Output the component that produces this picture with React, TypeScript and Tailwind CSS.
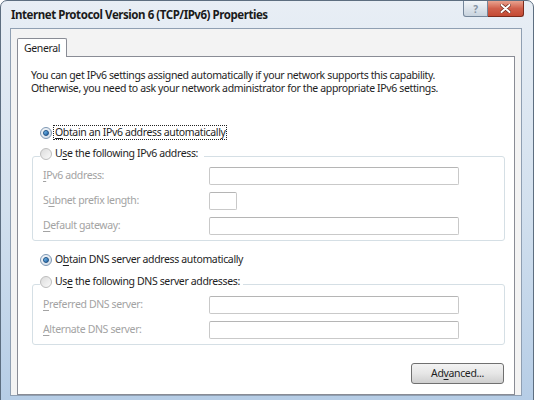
import React from "react";

const U = ({ children }: { children: React.ReactNode }) => (
  <span className="underline underline-offset-[2px] decoration-[1px]">{children}</span>
);

function Radio({ checked }: { checked?: boolean }) {
  if (checked) {
    return (
      <span className="w-[12px] h-[12px] shrink-0 rounded-full border border-[#7d97b3] bg-gradient-to-br from-[#f4f7fa] to-[#d3dde8] flex items-center justify-center">
        <span className="w-[6px] h-[6px] rounded-full border border-[#1c4f83] bg-gradient-to-br from-[#7cc4f5] to-[#1f5fa0]" />
      </span>
    );
  }
  return (
    <span className="w-[12px] h-[12px] shrink-0 rounded-full border border-[#bdbdbd] bg-gradient-to-br from-[#dcdcdc] to-[#fafafa]" />
  );
}

function Row({ label, box, first }: { label: React.ReactNode; box: string; first?: boolean }) {
  return (
    <div className={`flex items-center h-[18px] ${first ? "" : "mt-[7px]"}`}>
      <div className="w-[176px] pl-[10px] text-[#a3a3a3]">{label}</div>
      <div className={`${box} h-[18px] border border-[#c9c9c9] border-t-[#b5b5b5] rounded-[2px] bg-white`} />
    </div>
  );
}

export default function App() {
  return (
    <div className="w-[535px] h-[400px] overflow-hidden bg-white font-['Noto_Sans','DejaVu_Sans',sans-serif] text-[10.5px] tracking-[-0.36px] text-[#1e1e1e]">
      <div className="w-[534px] h-[420px] rounded-tr-[7px] rounded-tl-[7px] border border-[#5d6e80] bg-gradient-to-b from-[#e8eef5] via-[#d2e0ee] to-[#b3cbe5] flex flex-col">
        {/* title bar */}
        <div className="h-[27px] flex items-start">
          <div className="pl-[10px] pt-[6px] leading-[16px] text-[11.5px] tracking-[-0.45px] font-bold text-[#1b1b1b]">
            Internet Protocol Version 6 (TCP/IPv6) Properties
          </div>
          <div className="ml-auto mr-[9px] flex">
            <div className="w-[25px] h-[16px] rounded-bl-[3px] border border-t-0 border-[#75869a] bg-gradient-to-b from-[#f2f5f8] to-[#c8d3de] flex items-center justify-center text-[10px] font-bold leading-none text-[#8593a3]">
              ?
            </div>
            <div className="w-[36px] h-[16px] rounded-br-[3px] border border-l-0 border-t-0 border-[#7a2a1c] bg-gradient-to-b from-[#e9a28f] via-[#d0604c] to-[#c44a33] flex items-center justify-center">
              <svg width="11" height="9" viewBox="0 0 11 9">
                <path d="M1.5 1 L9.5 8 M9.5 1 L1.5 8" stroke="#6b2518" strokeWidth="3.4" strokeLinecap="round" />
                <path d="M1.5 1 L9.5 8 M9.5 1 L1.5 8" stroke="#ffffff" strokeWidth="2" strokeLinecap="round" />
              </svg>
            </div>
          </div>
        </div>
        {/* client area */}
        <div className="ml-[9px] w-[512px] border border-[#8f9fb2] bg-[#f3f3f3] pl-[6px] pr-[6px] pt-[9px] flex flex-col">
          <div className="flex">
            <div className="relative z-10 -mb-px w-[50px] h-[19px] border border-b-0 border-[#898c95] rounded-t-[2px] bg-white pl-[6px] leading-[18px]">
              General
            </div>
          </div>
          <div className="h-[339px] border border-[#898c95] bg-white pl-[13px] pt-[12px] flex flex-col">
            <p className="leading-[13px]">
              You can get IPv6 settings assigned automatically if your network supports this capability.
              <br />
              Otherwise, you need to ask your network administrator for the appropriate IPv6 settings.
            </p>
            <div className="mt-[30px] ml-[9px] h-[15px] flex items-center">
              <Radio checked />
              <span className="ml-[1px] px-[1px] border border-dotted border-[#222] leading-[13px]">
                <U>O</U>btain an IPv6 address automatically
              </span>
            </div>
            <fieldset className="mt-[6px] ml-[1px] mr-[9px] border border-[#d5dfe5] rounded-[3px] p-0 pb-[5px] pt-[1px]">
              <legend className="ml-[7px] pr-[3px] pb-[5px] p-0">
                <div className="flex items-center h-[15px] pr-[3px]">
                  <Radio />
                  <span className="ml-[3px]">
                    U<U>s</U>e the following IPv6 address:
                  </span>
                </div>
              </legend>
              <Row first label={<><U>I</U>Pv6 address:</>} box="w-[250px]" />
              <Row label={<>S<U>u</U>bnet prefix length:</>} box="w-[28px]" />
              <Row label={<><U>D</U>efault gateway:</>} box="w-[250px]" />
            </fieldset>
            <div className="mt-[11px] ml-[9px] h-[15px] flex items-center">
              <Radio checked />
              <span className="ml-[3px]">
                O<U>b</U>tain DNS server address automatically
              </span>
            </div>
            <fieldset className="mt-[7px] ml-[1px] mr-[9px] border border-[#d5dfe5] rounded-[3px] p-0 pb-[5px] pt-[2px]">
              <legend className="ml-[7px] pb-[5px] p-0">
                <div className="flex items-center h-[15px] pr-[3px]">
                  <Radio />
                  <span className="ml-[3px]">
                    Us<U>e</U> the following DNS server addresses:
                  </span>
                </div>
              </legend>
              <Row first label={<><U>P</U>referred DNS server:</>} box="w-[250px]" />
              <Row label={<><U>A</U>lternate DNS server:</>} box="w-[250px]" />
            </fieldset>
            <div className="mt-[18px] mr-[10px] self-end w-[93px] h-[21px] rounded-[3px] border border-[#707070] bg-gradient-to-b from-[#f3f3f3] via-[#e6e6e6] to-[#cfcfcf] flex items-center justify-center">
              Ad<U>v</U>anced...
            </div>
          </div>
        </div>
      </div>
    </div>
  );
}
